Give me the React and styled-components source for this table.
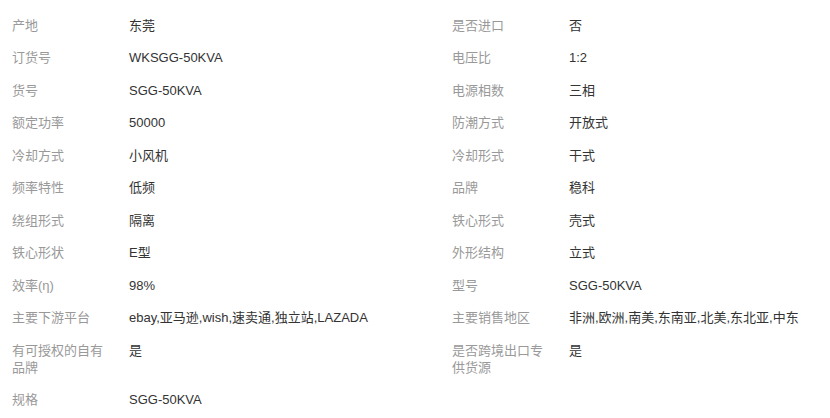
import * as React from 'react';
import styled, { createGlobalStyle } from 'styled-components';

const GlobalStyle = createGlobalStyle`
  html, body {
    margin: 0;
    padding: 0;
    background: #fff;
  }
  body {
    font-family: "Liberation Sans", Arial, "Noto Sans CJK SC", sans-serif;
  }
`

const Wrap = styled.div`
  width: 830px;
  height: 418px;
  overflow: hidden;
  padding: 9px 0 0 12px;
  box-sizing: border-box;
`
const Grid = styled.div`
  display: grid;
  grid-template-columns: 440px 440px;
`
const Item = styled.div`
  display: flex;
  align-items: flex-start;
  padding: 7.75px 0;
  font-size: 13px;
  line-height: 17px;
`
const Label = styled.div`
  flex: 0 0 100px;
  margin-right: 17px;
  color: #999;
`
const Value = styled.div`
  flex: 1;
  color: #333;
  white-space: nowrap;
`

const specs = [
    ['产地', '东莞'],
    ['是否进口', '否'],
    ['订货号', 'WKSGG-50KVA'],
    ['电压比', '1:2'],
    ['货号', 'SGG-50KVA'],
    ['电源相数', '三相'],
    ['额定功率', '50000'],
    ['防潮方式', '开放式'],
    ['冷却方式', '小风机'],
    ['冷却形式', '干式'],
    ['频率特性', '低频'],
    ['品牌', '稳科'],
    ['绕组形式', '隔离'],
    ['铁心形式', '壳式'],
    ['铁心形状', 'E型'],
    ['外形结构', '立式'],
    ['效率(η)', '98%'],
    ['型号', 'SGG-50KVA'],
    ['主要下游平台', 'ebay,亚马逊,wish,速卖通,独立站,LAZADA'],
    ['主要销售地区', '非洲,欧洲,南美,东南亚,北美,东北亚,中东'],
    ['有可授权的自有品牌', '是'],
    ['是否跨境出口专供货源', '是'],
    ['规格', 'SGG-50KVA'],
]

const App = () => {
    return (
        <Wrap>
            <GlobalStyle />
            <Grid>
                {specs.map(([label, value], i) => (
                    <Item key={i}>
                        <Label>{label}</Label>
                        <Value>{value}</Value>
                    </Item>
                ))}
            </Grid>
        </Wrap>
    )
}

export default App
